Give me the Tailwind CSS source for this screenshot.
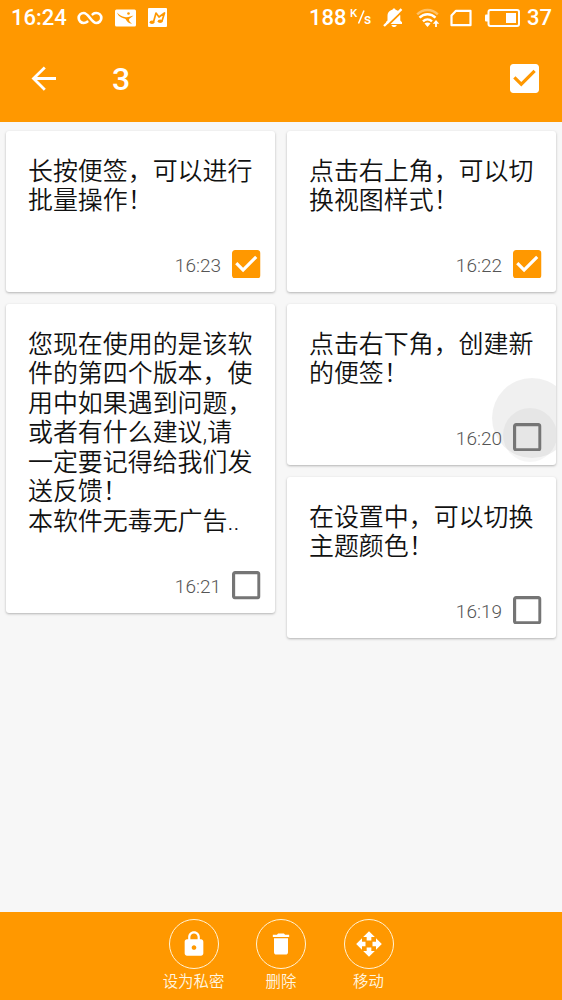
<!DOCTYPE html>
<html lang="zh-CN">
<head>
<meta charset="utf-8">
<title>便签</title>
<script src="https://cdn.jsdelivr.net/npm/@tailwindcss/browser@4"></script>
</head>
<body class="w-[562px] h-[1000px] overflow-hidden bg-[#f7f7f7] flex flex-col font-['Roboto','Noto_Sans_CJK_SC',sans-serif]">
<svg class="hidden">
  <symbol id="checked" viewBox="3 3 18 18"><path d="M19 3H5c-1.11 0-2 .9-2 2v14c0 1.1.89 2 2 2h14c1.11 0 2-.9 2-2V5c0-1.1-.89-2-2-2zm-9 14l-5-5 1.41-1.41L10 14.17l7.59-7.59L19 8l-9 9z"/></symbol>
  <symbol id="unchecked" viewBox="3 3 18 18"><path d="M19 5v14H5V5h14m0-2H5c-1.1 0-2 .9-2 2v14c0 1.1.9 2 2 2h14c1.1 0 2-.9 2-2V5c0-1.1-.9-2-2-2z"/></symbol>
</svg>

<header class="h-[122px] shrink-0 bg-[#ff9800] text-white flex flex-col">
  <div class="h-[35px] flex items-center justify-between pl-[11px] pr-[11px]">
    <div class="flex items-center">
      <span class="w-[55px] text-[22px] leading-[35px] font-medium whitespace-nowrap">16:24</span>
      <svg class="ml-[11px] w-[26px] h-[16px]" viewBox="0 0 26 16" fill="none" stroke="#fff" stroke-width="2.7" stroke-linecap="round"><path d="M10.300 11.800C9.300 12.600 8.300 13 6.700 13a5 5 0 0 1 0-10C11.500 3 14.500 13 19.300 13a5 5 0 0 0 0-10C17.700 3 16.700 3.400 15.700 4.200"/></svg>
      <svg class="ml-[12px] w-[21px] h-[18px]" viewBox="0 0 21 18"><rect y=".5" width="21" height="17" rx="1.500" fill="#fff"/><path d="M2 3.500C5.500 7.500 8 7.500 11 8.300C14 8.500 16 7 18.500 6.500C16.500 8.500 14.500 9 14 10.500C14 12.500 15.500 13.500 17 14.800C13.500 14.500 12 12.500 10.500 10C8 8.500 4 9 2 3.500Z" fill="#ff9800"/><circle cx="13.500" cy="4.500" r="1.300" fill="#ff9800"/></svg>
      <svg class="ml-[12px] w-[19px] h-[19px]" viewBox="0 0 19 19"><rect width="19" height="19" rx="1" fill="#fff"/><path d="M5.500 14L8 5L11 9L16.500 5L14 13" fill="none" stroke="#ff9800" stroke-width="1.700" stroke-linejoin="round"/><ellipse cx="4" cy="14.200" rx="2.400" ry="1.700" fill="#ff9800"/><ellipse cx="12.200" cy="13.300" rx="2.500" ry="1.800" fill="#ff9800"/></svg>
    </div>
    <div class="flex items-center">
      <span class="w-[38px] -ml-px mr-px text-[22px] leading-[35px] font-medium whitespace-nowrap">188</span>
      <span class="ml-[3px] w-[20px] h-[20px] flex font-medium leading-none"><span class="text-[11.500px] w-[7px] -ml-px">K</span><svg class="w-[8px] h-[18px] shrink-0" viewBox="0 0 8 18"><path d="M7 2.500L1.500 15.500" stroke="#fff" stroke-width="1.500"/></svg><span class="text-[14px] w-[6px] mt-[4px] -ml-px">s</span></span>
      <svg class="ml-[12px] w-[21px] h-[20px]" viewBox="0 0 21 20"><path d="M3 16V14L4.500 12.500V8C4.500 4.300 6.800 2.500 9.500 1.800C9.500 0 12.500 0 12.500 1.800C15.300 2.500 17.300 4.300 17.300 8V12.500L19 14.300V16H3Z M8.500 17H13.700C13.300 19.700 8.900 19.700 8.500 17Z" fill="#fff"/><path d="M2.500 19.500L20 2.500" stroke="#ff9800" stroke-width="2"/><path d="M1 18L18.500 1.200" stroke="#fff" stroke-width="2.400"/></svg>
      <svg class="ml-[12px] w-[24px] h-[20px]" viewBox="0 0 24 20" fill="none" stroke="#fff" stroke-width="2.400"><path d="M1.200 6.300C7 .5 16 .5 21.800 6.300" opacity=".4"/><path d="M3.500 9.700C8 5.100 15 5.100 19.500 9.700M7 13.300C9.700 10.700 13.300 10.700 16 13.300"/><path d="M8.500 15.500Q11.500 13.500 14.500 15.500L11.500 19Z" fill="#fff" stroke="none"/><path d="M20 19V14.500" stroke-width="1.800"/><path d="M16.800 15.800L20 12L23.200 15.800Z" fill="#fff" stroke="none"/></svg>
      <svg class="ml-[10px] w-[22px] h-[18px]" viewBox="0 0 22 18" fill="none" stroke="#fff" stroke-width="2.200" stroke-linejoin="round"><path d="M6 1.800H20.500V16.200H1.500V6.500Z"/></svg>
      <svg class="ml-[13px] w-[35px] h-[18px]" viewBox="0 0 35 18"><rect x="3.500" y="1" width="30.500" height="16" rx="2" fill="none" stroke="#fff" stroke-width="2"/><path d="M0 6.500Q0 5.500 1 5.500H3V12.500H1Q0 12.500 0 11.500Z" fill="#fff"/><rect x="21" y="4" width="10" height="10" fill="#fff"/></svg>
      <span class="ml-[7px] w-[24px] text-[22px] leading-[35px] font-medium whitespace-nowrap">37</span>
    </div>
  </div>
  <div class="h-[87px] flex items-center pl-[31px] pr-[23px]">
    <svg class="w-[26px] h-[26px]" viewBox="0 0 26 26" fill="none" stroke="#fff" stroke-width="2.800"><path d="M25 12.500H3M13.800 1.500L2.500 12.500L13.800 23.700"/></svg>
    <span class="ml-[55px] text-[32px] font-medium leading-[40px]">3</span>
    <svg class="ml-auto w-[29px] h-[29px] fill-white"><use href="#checked"/></svg>
  </div>
</header>

<main class="flex-1 flex justify-between items-start pl-[6px] pr-[6px] pt-[9px] text-[24.95px] leading-[29.6px] font-[350] text-[#111]">
  <div class="w-[269px] flex flex-col gap-[12.500px]">
    <article class="h-[160.500px] bg-white rounded-[3px] shadow-[0_1px_2.500px_rgba(0,0,0,0.28)] flex flex-col justify-between pl-[22px] pr-[14.500px] pt-[25.800px] pb-[13px]">
      <p class="whitespace-nowrap">长按便签，可以进行<br>批量操作！</p>
      <div class="flex items-center justify-end gap-[11px]"><time class="text-[19px] leading-[28px] font-light text-[#555] pt-[2px] -mb-[1px]">16:23</time><svg class="w-[28.500px] h-[28.500px] fill-[#ff9800]"><use href="#checked"/></svg></div>
    </article>
    <article class="h-[309px] bg-white rounded-[3px] shadow-[0_1px_2.500px_rgba(0,0,0,0.28)] flex flex-col justify-between pl-[22px] pr-[14.500px] pt-[25.500px] pb-[13px]">
      <p class="whitespace-nowrap">您现在使用的是该软<br>件的第四个版本，使<br>用中如果遇到问题，<br>或者有什么建议,请<br>一定要记得给我们发<br>送反馈！<br>本软件无毒无广告..</p>
      <div class="flex items-center justify-end gap-[11px]"><time class="text-[19px] leading-[28px] font-light text-[#555] pt-[2px] -mb-[1px]">16:21</time><svg class="w-[28.500px] h-[28.500px] fill-[#757575]"><use href="#unchecked"/></svg></div>
    </article>
  </div>
  <div class="w-[269px] flex flex-col gap-[12.500px]">
    <article class="h-[160.500px] bg-white rounded-[3px] shadow-[0_1px_2.500px_rgba(0,0,0,0.28)] flex flex-col justify-between pl-[22px] pr-[14.500px] pt-[25.800px] pb-[13px]">
      <p class="whitespace-nowrap">点击右上角，可以切<br>换视图样式！</p>
      <div class="flex items-center justify-end gap-[11px]"><time class="text-[19px] leading-[28px] font-light text-[#555] pt-[2px] -mb-[1px]">16:22</time><svg class="w-[28.500px] h-[28.500px] fill-[#ff9800]"><use href="#checked"/></svg></div>
    </article>
    <article class="relative overflow-hidden h-[160.500px] bg-white rounded-[3px] shadow-[0_1px_2.500px_rgba(0,0,0,0.28)] flex flex-col justify-between pl-[22px] pr-[14.500px] pt-[25.500px] pb-[13px]">
      <span class="absolute left-[205px] top-[74px] w-[80px] h-[80px] rounded-full bg-black/6"></span>
      <span class="absolute left-[216px] top-[104px] w-[54px] h-[54px] rounded-full bg-black/4"></span>
      <p class="relative whitespace-nowrap">点击右下角，创建新<br>的便签！</p>
      <div class="relative flex items-center justify-end gap-[11px]"><time class="text-[19px] leading-[28px] font-light text-[#555] pt-[2px] -mb-[1px]">16:20</time><svg class="w-[28.500px] h-[28.500px] fill-[#757575]"><use href="#unchecked"/></svg></div>
    </article>
    <article class="h-[160.500px] bg-white rounded-[3px] shadow-[0_1px_2.500px_rgba(0,0,0,0.28)] flex flex-col justify-between pl-[22px] pr-[14.500px] pt-[25.500px] pb-[13px]">
      <p class="whitespace-nowrap">在设置中，可以切换<br>主题颜色！</p>
      <div class="flex items-center justify-end gap-[11px]"><time class="text-[19px] leading-[28px] font-light text-[#555] pt-[2px] -mb-[1px]">16:19</time><svg class="w-[28.500px] h-[28.500px] fill-[#757575]"><use href="#unchecked"/></svg></div>
    </article>
  </div>
</main>

<footer class="h-[88px] shrink-0 bg-[#ff9800] text-[#fff6e0] flex justify-center pt-[7px] text-[15.400px] leading-[22px] font-[350]">
  <div class="w-[87.500px] flex flex-col items-center">
    <span class="w-[50px] h-[50px] rounded-full border border-[#fff3d6] flex items-center justify-center"><svg class="w-[28px] h-[28px] fill-white" viewBox="0 0 24 24"><path d="M18 8h-1V6c0-2.760-2.240-5-5-5S7 3.240 7 6v2H6c-1.100 0-2 .9-2 2v10c0 1.100.9 2 2 2h12c1.100 0 2-.9 2-2V10c0-1.100-.9-2-2-2zm-6 9c-1.100 0-2-.9-2-2s.9-2 2-2 2 .9 2 2-.9 2-2 2zm3.100-9H8.900V6c0-1.710 1.390-3.100 3.100-3.100 1.710 0 3.100 1.390 3.100 3.100v2z"/></svg></span>
    <span class="mt-[2px] whitespace-nowrap">设为私密</span>
  </div>
  <div class="w-[87.500px] flex flex-col items-center">
    <span class="w-[50px] h-[50px] rounded-full border border-[#fff3d6] flex items-center justify-center"><svg class="w-[28px] h-[28px] fill-white" viewBox="0 0 24 24"><path d="M6 19c0 1.100.9 2 2 2h8c1.100 0 2-.9 2-2V7H6v12zM19 4h-3.500l-1-1h-5l-1 1H5v2h14V4z"/></svg></span>
    <span class="mt-[2px] whitespace-nowrap">删除</span>
  </div>
  <div class="w-[87.500px] flex flex-col items-center">
    <span class="w-[50px] h-[50px] rounded-full border border-[#fff3d6] flex items-center justify-center"><svg class="w-[28px] h-[28px] fill-white" viewBox="0 0 24 24"><path d="M10 9h4V6h3l-5-5-5 5h3v3zm-1 1H6V7l-5 5 5 5v-3h3v-4zm14 2l-5-5v3h-3v4h3v3l5-5zm-9 3h-4v3H7l5 5 5-5h-3v-3z"/></svg></span>
    <span class="mt-[2px] whitespace-nowrap">移动</span>
  </div>
</footer>
</body>
</html>
